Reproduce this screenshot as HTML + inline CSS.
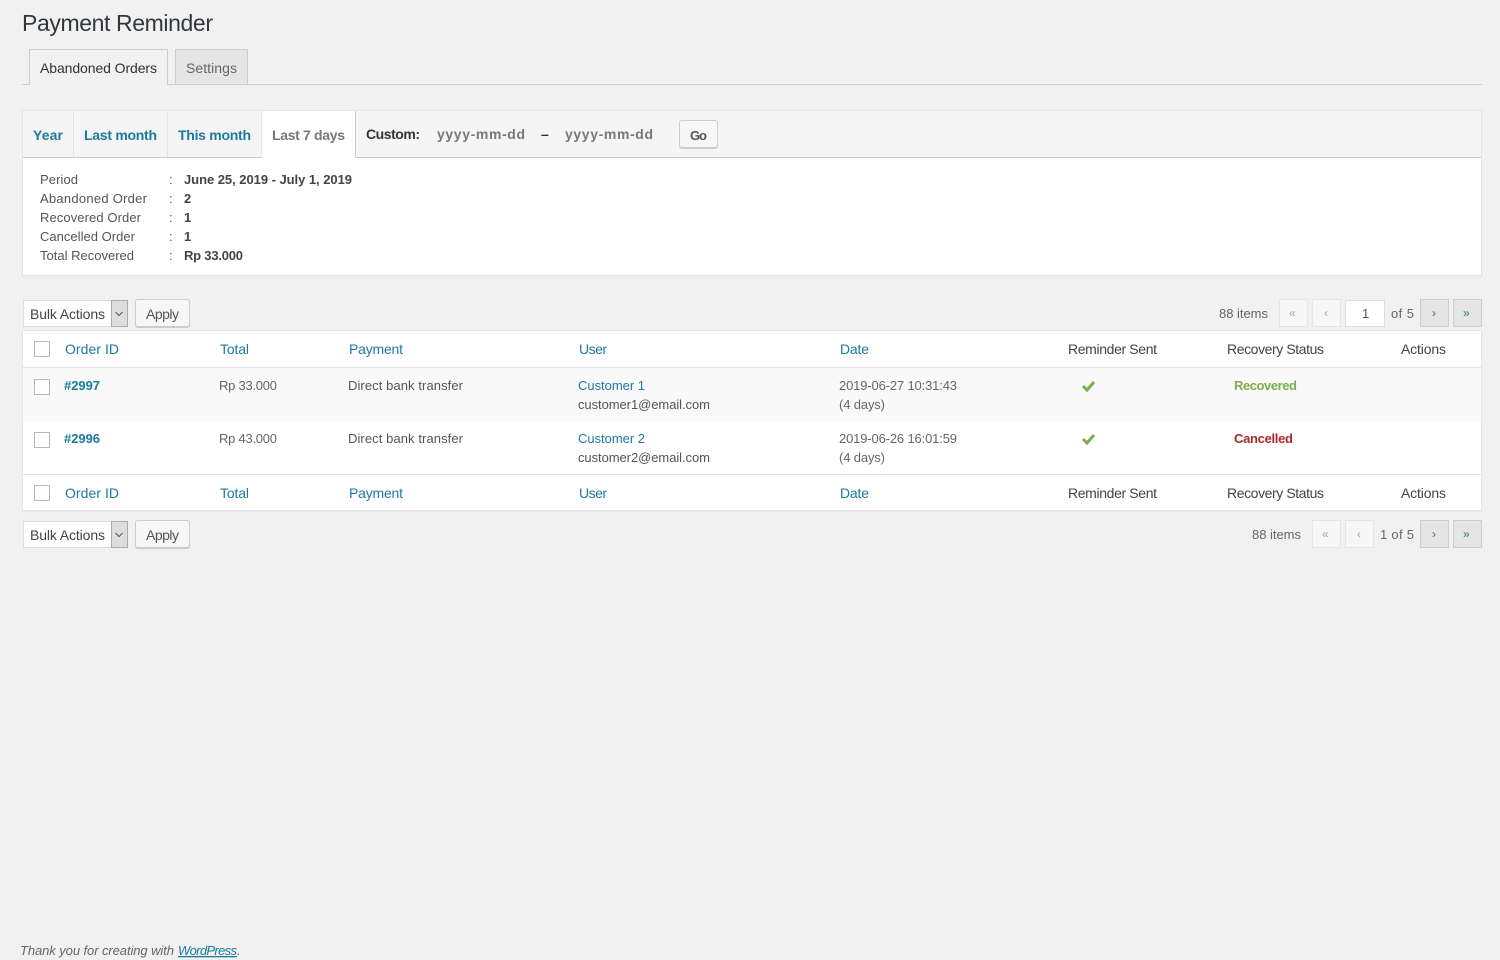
<!DOCTYPE html>
<html lang="en">
<head>
<meta charset="utf-8">
<title>Payment Reminder</title>
<style>
html,body{margin:0;padding:0;width:1500px;height:960px;overflow:hidden;background:#f1f1f1}
.b{position:absolute;box-sizing:border-box}
.pg{height:28px;width:29px;top:299px}
.off{background:#f7f7f7;border:1px solid #e5e5e5}
.on{background:#e5e5e5;border:1px solid #ccc}
.btn{background:#f7f7f7;border:1px solid #ccc;border-radius:3px;box-shadow:0 1px 0 #ccc}
.cb{width:16px;height:16px;left:34px;background:#fff;border:1px solid #b4b9be}
.sel{left:23px;width:105px;height:27px;background:#fff;border:1px solid #ddd}
.arr{left:111px;width:17px;height:27px;background:#ddd;border:1px solid #aaa}
svg.t{position:absolute;left:0;top:0}
svg.t text{font-family:"Liberation Sans",sans-serif;font-size:13px;fill:#555}
.l{fill:#1b7a9f!important}
.bd{font-weight:bold}
.h{font-size:14px!important}
.d{fill:#a0a5aa!important;font-size:12px!important}
.n{fill:#1b7a9f!important;font-size:12px!important}
</style>
</head>
<body>
<!-- tabs -->
<div class="b" style="left:22px;top:84px;width:1460px;height:1px;background:#ccc"></div>
<div class="b" style="left:29px;top:49px;width:139px;height:36px;background:#f1f1f1;border:1px solid #ccc;border-bottom:0"></div>
<div class="b" style="left:175px;top:49px;width:73px;height:36px;background:#e5e5e5;border:1px solid #ccc"></div>
<!-- period panel -->
<div class="b" style="left:22px;top:110px;width:1460px;height:166px;background:#fff;border:1px solid #e5e5e5;box-shadow:0 1px 1px rgba(0,0,0,.04)"></div>
<div class="b" style="left:23px;top:111px;width:1458px;height:47px;background:#f5f5f5;border-bottom:1px solid #ccc"></div>
<div class="b" style="left:73px;top:111px;width:1px;height:46px;background:#e5e5e5"></div>
<div class="b" style="left:167px;top:111px;width:1px;height:46px;background:#e5e5e5"></div>
<div class="b" style="left:261px;top:111px;width:95px;height:47px;background:#fff;border-left:1px solid #e5e5e5;border-right:1px solid #ccc"></div>
<div class="b btn" style="left:679px;top:120px;width:39px;height:28px"></div>
<!-- top toolbar -->
<div class="b sel" style="top:300px"></div>
<div class="b arr" style="top:300px"></div>
<div class="b btn" style="left:135px;top:299px;width:55px;height:28px"></div>
<div class="b pg off" style="left:1279px"></div>
<div class="b pg off" style="left:1312px"></div>
<div class="b" style="left:1345px;top:300px;width:40px;height:27px;background:#fff;border:1px solid #ddd"></div>
<div class="b pg on" style="left:1420px"></div>
<div class="b pg on" style="left:1453px"></div>
<!-- table -->
<div class="b" style="left:22px;top:330px;width:1460px;height:181px;background:#fff;border:1px solid #e5e5e5;box-shadow:0 1px 1px rgba(0,0,0,.04)"></div>
<div class="b" style="left:23px;top:367px;width:1458px;height:1px;background:#e1e1e1"></div>
<div class="b" style="left:23px;top:368px;width:1458px;height:53px;background:#f9f9f9"></div>
<div class="b" style="left:23px;top:474px;width:1458px;height:1px;background:#e1e1e1"></div>
<div class="b cb" style="top:341px"></div>
<div class="b cb" style="top:379px"></div>
<div class="b cb" style="top:432px"></div>
<div class="b cb" style="top:485px"></div>
<!-- bottom toolbar -->
<div class="b sel" style="top:521px"></div>
<div class="b arr" style="top:521px"></div>
<div class="b btn" style="left:135px;top:520px;width:55px;height:28px"></div>
<div class="b pg off" style="left:1312px;top:520px"></div>
<div class="b pg off" style="left:1345px;top:520px"></div>
<div class="b pg on" style="left:1420px;top:520px"></div>
<div class="b pg on" style="left:1453px;top:520px"></div>

<svg class="t" width="1500" height="960" viewBox="0 0 1500 960" xmlns="http://www.w3.org/2000/svg">
<text x="22" y="31" textLength="191" style="font-size:23px;fill:#32373c">Payment Reminder</text>
<text class="h" x="40" y="73" textLength="117" style="fill:#333">Abandoned Orders</text>
<text class="h" x="186" y="73" textLength="51" style="fill:#666">Settings</text>

<text class="h l bd" x="33" y="140" textLength="30">Year</text>
<text class="h l bd" x="84" y="140" textLength="73">Last month</text>
<text class="h l bd" x="178" y="140" textLength="73">This month</text>
<text class="h bd" x="272" y="140" textLength="73" style="fill:#777">Last 7 days</text>
<text class="h bd" x="366" y="139" textLength="54" style="fill:#333">Custom:</text>
<text class="h bd" x="437" y="139" textLength="88" style="fill:#777">yyyy-mm-dd</text>
<text class="h bd" x="541" y="139" textLength="7" style="fill:#333">–</text>
<text class="h bd" x="565" y="139" textLength="88" style="fill:#777">yyyy-mm-dd</text>
<text class="bd" x="690" y="140" textLength="17" style="fill:#555">Go</text>

<text x="40" y="184" textLength="38">Period</text>
<text x="40" y="203" textLength="107">Abandoned Order</text>
<text x="40" y="222" textLength="101">Recovered Order</text>
<text x="40" y="241" textLength="95">Cancelled Order</text>
<text x="40" y="260" textLength="94">Total Recovered</text>
<text x="169" y="184">:</text><text x="169" y="203">:</text><text x="169" y="222">:</text><text x="169" y="241">:</text><text x="169" y="260">:</text>
<text class="bd" x="184" y="184" textLength="168" style="fill:#444">June 25, 2019 - July 1, 2019</text>
<text class="bd" x="184" y="203" style="fill:#444">2</text>
<text class="bd" x="184" y="222" style="fill:#444">1</text>
<text class="bd" x="184" y="241" style="fill:#444">1</text>
<text class="bd" x="184" y="260" textLength="59" style="fill:#444">Rp 33.000</text>

<!-- top toolbar text -->
<text class="h" x="30" y="319" textLength="75" style="fill:#444">Bulk Actions</text>
<path d="M115.500 312l3.500 3.500 3.500-3.500" fill="none" stroke="#555" stroke-width="1"/>
<text class="h" x="146" y="319" textLength="33" style="fill:#555">Apply</text>
<text x="1219" y="318" textLength="49" style="fill:#666">88 items</text>
<text class="d" x="1289" y="317">«</text>
<text class="d" x="1324" y="317">‹</text>
<text x="1362" y="318" style="fill:#555">1</text>
<text x="1391" y="318" textLength="23" style="fill:#666">of 5</text>
<text class="n" x="1432" y="317">›</text>
<text class="n" x="1463" y="317">»</text>

<!-- header -->
<text class="h l" x="65" y="354" textLength="54">Order ID</text>
<text class="h l" x="220" y="354" textLength="29">Total</text>
<text class="h l" x="349" y="354" textLength="54">Payment</text>
<text class="h l" x="579" y="354" textLength="28">User</text>
<text class="h l" x="840" y="354" textLength="29">Date</text>
<text class="h" x="1068" y="354" textLength="89" style="fill:#444">Reminder Sent</text>
<text class="h" x="1227" y="354" textLength="97" style="fill:#444">Recovery Status</text>
<text class="h" x="1401" y="354" textLength="45" style="fill:#444">Actions</text>

<!-- row 1 -->
<text class="bd l" x="64" y="390" textLength="36">#2997</text>
<text x="219" y="390" textLength="58" style="fill:#666">Rp 33.000</text>
<text x="348" y="390" textLength="115">Direct bank transfer</text>
<text class="l" x="578" y="390" textLength="67">Customer 1</text>
<text x="578" y="409" textLength="132">customer1@email.com</text>
<text x="839" y="390" textLength="118" style="fill:#666">2019-06-27 10:31:43</text>
<text x="839" y="409" textLength="46" style="fill:#666">(4 days)</text>
<path d="M1083 386l4 4 7-8" fill="none" stroke="#7ead4f" stroke-width="3"/>
<text class="bd" x="1234" y="390" textLength="63" style="fill:#7ead4f">Recovered</text>

<!-- row 2 -->
<text class="bd l" x="64" y="443" textLength="36">#2996</text>
<text x="219" y="443" textLength="58" style="fill:#666">Rp 43.000</text>
<text x="348" y="443" textLength="115">Direct bank transfer</text>
<text class="l" x="578" y="443" textLength="67">Customer 2</text>
<text x="578" y="462" textLength="132">customer2@email.com</text>
<text x="839" y="443" textLength="118" style="fill:#666">2019-06-26 16:01:59</text>
<text x="839" y="462" textLength="46" style="fill:#666">(4 days)</text>
<path d="M1083 439l4 4 7-8" fill="none" stroke="#7ead4f" stroke-width="3"/>
<text class="bd" x="1234" y="443" textLength="59" style="fill:#a92828">Cancelled</text>

<!-- footer row -->
<text class="h l" x="65" y="498" textLength="54">Order ID</text>
<text class="h l" x="220" y="498" textLength="29">Total</text>
<text class="h l" x="349" y="498" textLength="54">Payment</text>
<text class="h l" x="579" y="498" textLength="28">User</text>
<text class="h l" x="840" y="498" textLength="29">Date</text>
<text class="h" x="1068" y="498" textLength="89" style="fill:#444">Reminder Sent</text>
<text class="h" x="1227" y="498" textLength="97" style="fill:#444">Recovery Status</text>
<text class="h" x="1401" y="498" textLength="45" style="fill:#444">Actions</text>

<!-- bottom toolbar text -->
<text class="h" x="30" y="540" textLength="75" style="fill:#444">Bulk Actions</text>
<path d="M115.500 533l3.500 3.500 3.500-3.500" fill="none" stroke="#555" stroke-width="1"/>
<text class="h" x="146" y="540" textLength="33" style="fill:#555">Apply</text>
<text x="1252" y="539" textLength="49" style="fill:#666">88 items</text>
<text class="d" x="1322" y="538">«</text>
<text class="d" x="1357" y="538">‹</text>
<text x="1380" y="539" textLength="34" style="fill:#666">1 of 5</text>
<text class="n" x="1432" y="538">›</text>
<text class="n" x="1463" y="538">»</text>

<!-- wp footer -->
<text x="20" y="955" textLength="154" style="font-style:italic;fill:#666">Thank you for creating with</text>
<text class="l" x="178" y="955" textLength="59" style="font-style:italic;text-decoration:underline">WordPress</text>
<text x="237" y="955" style="font-style:italic;fill:#666">.</text>
</svg>
</body>
</html>
